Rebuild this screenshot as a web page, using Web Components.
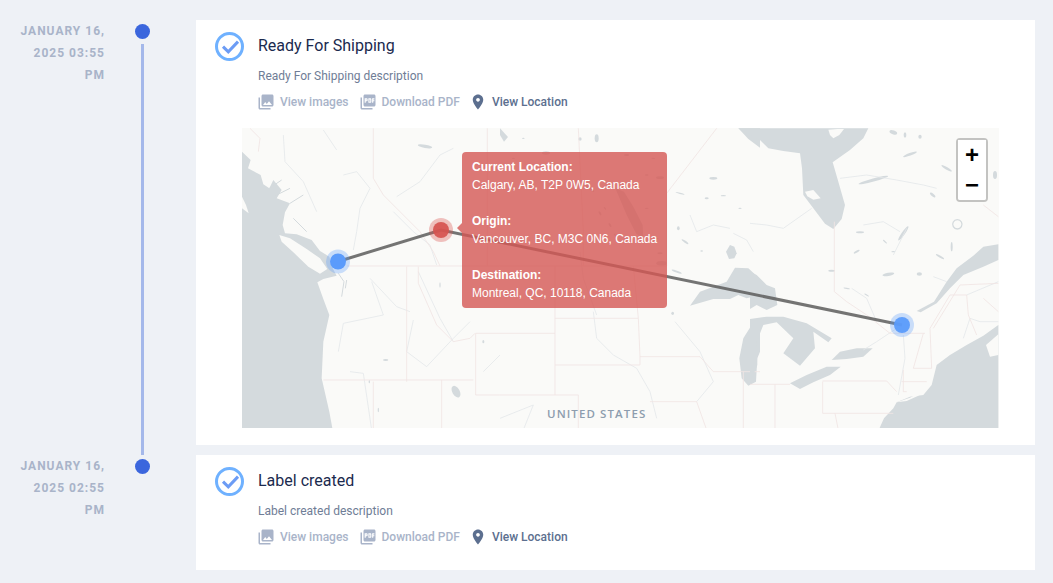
<!DOCTYPE html>
<html lang="en">
<head>
<meta charset="utf-8">
<title>Shipment tracking</title>
<style>
  html, body { margin: 0; background: #eef1f6; }
  body { font-family: Roboto, "Liberation Sans", sans-serif; height: 583px; overflow: hidden; }
  shipment-timeline { padding-top: 20px; }
</style>
</head>
<body>
<shipment-timeline>
  <timeline-row date="January 16, 2025 03:55 PM" line>
    <status-card title="Ready For Shipping" description="Ready For Shipping description">
      <shipment-map></shipment-map>
    </status-card>
  </timeline-row>
  <timeline-row date="January 16, 2025 02:55 PM">
    <status-card title="Label created" description="Label created description"></status-card>
  </timeline-row>
</shipment-timeline>

<script>
const ICONS = {
  images: "M22 16V4c0-1.1-.9-2-2-2H8c-1.1 0-2 .9-2 2v12c0 1.1.9 2 2 2h12c1.1 0 2-.9 2-2zm-11-4l2.03 2.71L16 11l4 5H8l3-4zM2 6v14c0 1.1.9 2 2 2h14v-2H4V6H2z",
  pdf: "M20 2H8c-1.1 0-2 .9-2 2v12c0 1.1.9 2 2 2h12c1.1 0 2-.9 2-2V4c0-1.1-.9-2-2-2zm-8.5 7.5c0 .83-.67 1.5-1.5 1.5H9v2H7.5V7H10c.83 0 1.5.67 1.5 1.5v1zm5 2c0 .83-.67 1.5-1.5 1.5h-2.5V7H15c.83 0 1.5.67 1.5 1.5v3zm4-3H19v1h1.5V11H19v2h-1.5V7h3v1.5zM9 9.5h1v-1H9v1zM4 6H2v14c0 1.1.9 2 2 2h14v-2H4V6zm10 5.5h1v-3h-1v3z",
  pin: "M12 2C8.13 2 5 5.13 5 9c0 5.25 7 13 7 13s7-7.75 7-13c0-3.87-3.13-7-7-7zm0 9.5c-1.38 0-2.5-1.12-2.5-2.5s1.12-2.5 2.5-2.5 2.5 1.12 2.5 2.5-1.12 2.5-2.5 2.5z"
};

class ShipmentTimeline extends HTMLElement {
  constructor() {
    super();
    const root = this.attachShadow({ mode: "open" });
    root.innerHTML = `
      <style>
        :host { display: block; }
      </style>
      <slot></slot>
    `;
  }
}

class TimelineRow extends HTMLElement {
  constructor() {
    super();
    this.attachShadow({ mode: "open" });
  }

  connectedCallback() {
    const date = this.getAttribute("date");
    const hasLine = this.hasAttribute("line");
    this.shadowRoot.innerHTML = `
      <style>
        :host {
          display: grid;
          grid-template-columns: 91px 28px 1fr;
          column-gap: 24px;
          padding-left: 14px;
          padding-right: 18px;
        }
        .date {
          font-size: 12px;
          font-weight: 700;
          line-height: 22px;
          letter-spacing: 1px;
          text-transform: uppercase;
          text-align: right;
          color: #a9b4c9;
        }
        .rail {
          display: flex;
          flex-direction: column;
          align-items: center;
          margin-left: -1px;
        }
        .dot {
          width: 15px;
          height: 15px;
          margin-top: 4px;
          border-radius: 50%;
          background: #3b66dd;
          flex: none;
        }
        .line {
          flex: 1;
          width: 3px;
          margin-top: 5px;
          background: #a4b8ea;
        }
        .content { margin-left: 15px; min-width: 0; }
      </style>
      <div class="date">${date}</div>
      <div class="rail">
        <div class="dot"></div>
        ${hasLine ? '<div class="line"></div>' : ""}
      </div>
      <div class="content"><slot></slot></div>
    `;
  }
}

class ActionLink extends HTMLElement {
  constructor() {
    super();
    this.attachShadow({ mode: "open" });
  }

  connectedCallback() {
    const icon = ICONS[this.getAttribute("icon")];
    this.shadowRoot.innerHTML = `
      <style>
        :host {
          display: inline-flex;
          align-items: center;
          gap: 5px;
          height: 18px;
          font-size: 12px;
          font-weight: 500;
          color: #a9b4c9;
          white-space: nowrap;
        }
        :host([active]) { color: #5c6f8f; margin-left: -1px; }
        svg { width: 18px; height: 18px; fill: currentColor; flex: none; }
      </style>
      <svg viewBox="0 0 24 24"><path d="${icon}"/></svg>
      <slot></slot>
    `;
  }
}

class StatusCard extends HTMLElement {
  constructor() {
    super();
    this.attachShadow({ mode: "open" });
  }

  connectedCallback() {
    this.shadowRoot.innerHTML = `
      <style>
        :host {
          display: block;
          background: #fff;
          margin-bottom: 10px;
          padding: 16px 36px 17px 19px;
        }
        .head { display: flex; column-gap: 13px; }
        .check { width: 30px; height: 30px; flex: none; margin-top: -4px; }
        .body { flex: 1; min-width: 0; }
        .title { font-size: 16px; line-height: 20px; color: #1b2a4e; }
        .description { font-size: 12px; line-height: 18px; margin-top: 11px; color: #6f7d96; }
        .actions { display: flex; gap: 10px; margin: 8px 0 0 -1px; padding-bottom: 7px; }
        ::slotted(shipment-map) { margin: 10px 0 0 -16px; }
      </style>
      <div class="head">
        <svg class="check" viewBox="0 0 30 30">
          <circle cx="14.5" cy="14.5" r="13" fill="none" stroke="#6fb1ff" stroke-width="3"/>
          <path d="M8 14.6l5.3 5.3L23 9.6" fill="none" stroke="#6c9cf5" stroke-width="3"/>
        </svg>
        <div class="body">
          <div class="title">${this.getAttribute("title")}</div>
          <div class="description">${this.getAttribute("description")}</div>
          <div class="actions">
            <action-link icon="images">View images</action-link>
            <action-link icon="pdf">Download PDF</action-link>
            <action-link icon="pin" active>View Location</action-link>
          </div>
          <slot></slot>
        </div>
      </div>
    `;
  }
}

class ZoomControl extends HTMLElement {
  constructor() {
    super();
    const root = this.attachShadow({ mode: "open" });
    root.innerHTML = `
      <style>
        :host {
          position: absolute;
          top: 10px;
          right: 11px;
          width: 28px;
          border: 2px solid rgba(0, 0, 0, .22);
          border-radius: 4px;
          background-clip: padding-box;
        }
        div {
          box-sizing: border-box;
          height: 30px;
          background: #fff;
          color: #000;
          font: 700 24px/29px "Liberation Sans", sans-serif;
          text-align: center;
        }
        div:first-child { border-bottom: 1px solid #ccc; border-radius: 2px 2px 0 0; }
        div:last-child { border-radius: 0 0 2px 2px; }
      </style>
      <div>+</div>
      <div>&minus;</div>
    `;
  }
}

class MapTooltip extends HTMLElement {
  constructor() {
    super();
    const root = this.attachShadow({ mode: "open" });
    root.innerHTML = `
      <style>
        :host {
          position: absolute;
          left: 220px;
          top: 24px;
          width: 185px;
          height: 144px;
          padding: 6px 10px;
          border-radius: 4px;
          background: rgba(212, 88, 84, .8);
          color: #fff;
          font: 12px/18px "Liberation Sans", Arial, sans-serif;
          white-space: nowrap;
        }
        :host::before {
          content: "";
          position: absolute;
          left: -5px;
          top: 71px;
          border: 5px solid transparent;
          border-left: 0;
          border-right-color: rgba(212, 88, 84, .8);
        }
        b { display: block; font-weight: 700; }
        p { margin: 0 0 18px; }
      </style>
      <p><b>Current Location:</b>Calgary, AB, T2P 0W5, Canada</p>
      <p><b>Origin:</b>Vancouver, BC, M3C 0N6, Canada</p>
      <p><b>Destination:</b>Montreal, QC, 10118, Canada</p>
    `;
  }
}

// map drawn in crop coordinates, 3 units = 1px
const WATER = "#d4dadd", LAND = "#fafaf8", BORDER = "#f0e4e3", RIVER = "#e4e8ea";
const blob = (x, y, rx, ry, rot = 0) =>
  `<ellipse cx="${x}" cy="${y}" rx="${rx}" ry="${ry}" transform="rotate(${rot} ${x} ${y})"/>`;

const WEST = `
  <g fill="${WATER}">
    <path d="M6 80L32 105 24 130 62 150 70 178 88 190 100 165 125 195 110 220 150 235 135 262 128 300 135 325 170 328 215 345 240 378 268 395 278 430 290 452 250 462 232 472 250 522 268 570 250 650 245 760 268 860 278 915H6Z"/>
    ${blob(555, 64, 22, 5, 10)}${blob(648, 800, 11, 19, -30)}${blob(437, 705, 8, 3)}${blob(600, 480, 2, 8)}${blob(415, 855, 2, 7)}${blob(388, 770, 2, 5)}
    ${blob(730, 650, 3, 5)}
  </g>
  <path fill="${LAND}" d="M118 330L150 340 200 372 240 400 262 432 240 446 205 425 160 382 125 350Z"/>
  <path fill="${LAND}" d="M6 215L18 240 26 265 6 250Z"/>
  <path fill="none" stroke="${WATER}" stroke-width="3" d="M295 445L312 470 305 515M320 465L316 490M88 190L125 165M100 215L150 190M150 235L190 210M160 280L200 320"/>
  <path fill="none" stroke="${RIVER}" stroke-width="2.5" d="M310 150L350 140 390 190 360 250 350 320 340 375M130 30L135 110 190 170 230 260M250 15L290 75M470 215L540 170 600 90 640 70M460 260L520 320 570 360 590 420M395 470L430 570 310 595 295 680M520 585L500 680 560 725 640 640 690 590M390 460L470 545 510 560M535 440L600 580 640 650M330 740L370 745 395 915M730 740L780 690"/>
  <path fill="none" stroke="${BORDER}" stroke-width="2.5" d="M320 423H780M400 10V160L430 210 480 260 540 320 580 380 600 423M742 10V423M500 425V770M535 425V475L590 600 640 650 690 640 705 625M30 10L60 40 55 80M707 625V810H780M707 625H780M250 765H700M400 770V915M605 765V915"/>
`;

const CENTRAL = `
  <g fill="${WATER}">
    <path d="M570 542L600 500 680 470 705 428 745 430 780 462V510L740 520 715 510 690 522 640 522Z"/>
    <path d="M780 582L755 600 730 640 718 700 725 760 745 782 768 770 772 700 780 680Z"/>
    <path d="M715 10H780V68L745 42Z"/>
    <path d="M678 380L690 360 703 365 710 385 703 400 687 402Z"/>
    <path d="M346 190L372 200 400 245 428 300 430 345 408 325 380 270Z"/>
    <path d="M0 10L24 36 12 50 0 30Z"/>
    ${blob(138, 84, 12, 5)}${blob(290, 40, 6, 12)}${blob(480, 158, 12, 4)}${blob(300, 265, 7, 3, 60)}
    ${blob(330, 300, 7, 3, 60)}${blob(380, 90, 8, 3)}${blob(460, 100, 6, 2)}${blob(640, 160, 12, 4)}${blob(540, 205, 14, 2, 15)}
    ${blob(620, 220, 6, 3)}${blob(670, 212, 8, 2)}${blob(720, 250, 5, 2)}${blob(535, 310, 4, 6)}${blob(555, 350, 12, 3, 35)}
    ${blob(605, 378, 4, 2)}${blob(485, 415, 16, 7)}${blob(530, 440, 16, 3, 20)}${blob(518, 565, 4, 5)}${blob(70, 40, 4, 2)}
    ${blob(240, 42, 5, 5)}${blob(190, 130, 7, 3)}${blob(270, 190, 16, 4, 40)}${blob(40, 100, 5, 2)}${blob(440, 250, 6, 2)}
    ${blob(315, 250, 5, 2, 50)}${blob(345, 330, 5, 2, 50)}${blob(470, 340, 6, 2)}${blob(480, 385, 8, 3)}${blob(440, 150, 6, 2)}
  </g>
  <path fill="none" stroke="${RIVER}" stroke-width="2.5" d="M570 270L590 320 640 300 690 310M700 325L740 345 760 380M280 560L290 640 340 690 410 730 450 800 470 880M0 880L100 840 70 915M525 590L600 680 640 770 590 830M240 380L250 460 290 570"/>
  <path fill="none" stroke="${BORDER}" stroke-width="2.5" d="M235 10L250 320V423M0 423H500M500 205L650 10M500 205V423M165 423V810M165 580H415L400 423M415 580L420 695 420 720M0 625H165M165 720H420M420 695H600L640 740H780M0 810H235V915M450 830H590L620 915M730 740V915"/>
`;

const EAST = `
  <g fill="${WATER}">
    <path d="M-35 10H355L340 40 300 75 248 112 262 160 285 240 275 282 250 312 225 296 190 250 160 210 156 130 150 85 100 78 55 70 30 45 0 30Z"/>
    <path d="M0 440L20 450 50 480 75 490 82 540 50 555 20 540 0 552Z"/>
    <path d="M0 582L50 575 100 575 170 595 245 640 235 652 190 620 195 670 150 722 100 685 130 640 80 592 40 600 20 650 22 720 0 775Z"/>
    <path d="M120 775L170 750 230 725 272 725 240 750 190 772 150 792Z"/>
    <path d="M245 705L270 680 320 670 368 670 340 695 290 702Z"/>
    <path d="M745 358L700 365 670 392 620 430 590 470 552 530 500 558 512 562 560 535 600 490 640 450 700 425 745 405Z"/>
    <path d="M745 600L700 632 650 660 600 690 560 720 545 780 520 810 480 815 440 832 430 850 402 880 386 915H745Z"/>
    ${blob(480, 88, 22, 4, -20)}${blob(430, 22, 12, 6, 20)}${blob(465, 30, 4, 8)}${blob(370, 165, 46, 5, -15)}${blob(460, 325, 5, 26, 35)}
    ${blob(508, 447, 8, 5)}${blob(415, 448, 18, 5, -10)}${blob(330, 322, 12, 3)}${blob(245, 437, 10, 3)}${blob(570, 395, 14, 3, 30)}
    ${blob(605, 365, 3, 14)}${blob(548, 210, 10, 4, 40)}${blob(590, 130, 18, 4, 30)}${blob(735, 150, 6, 12)}${blob(320, 380, 10, 3, -30)}
    ${blob(405, 350, 8, 2, 40)}${blob(350, 510, 8, 2, 30)}${blob(290, 490, 10, 2, 10)}${blob(510, 35, 5, 6)}${blob(430, 380, 6, 2)}
    <path fill="none" stroke="${WATER}" stroke-width="4" d="M622 284a14 14 0 1 0 .1 0"/>
  </g>
  <g fill="${LAND}">
    <path d="M235 14L262 12 282 12 268 30 250 40 240 30Z"/>
    <path d="M165 200L190 195 212 220 190 224 172 214Z"/>
    <path d="M708 660L745 628V690L720 695Z"/>
    <path d="M440 832L480 818 512 800 505 812 470 828Z"/>
  </g>
  <path fill="none" stroke="${RIVER}" stroke-width="2.5" d="M270 160L350 150 440 165 520 180 560 190M0 295L50 300 100 310 185 250M340 300L400 290 450 320M470 310L430 390M550 455L590 470M440 610L380 650 340 675M460 630L465 700 445 810M305 490L350 520 380 590M640 640L660 580 690 590 745 590M650 510L745 470"/>
  <path fill="none" stroke="${BORDER}" stroke-width="2.5" d="M253 290V500L290 530 350 570 420 625H525M540 610L600 510 650 510 655 570 680 630M550 610L630 480 745 475M520 625L490 730H545L540 610M460 735V800M455 770H530M460 800H470M75 778V915M0 778H120M218 770V865M218 768H410L440 800M218 865H430M255 865L265 915M700 520L745 560M700 240L745 275"/>
`;

class ShipmentMap extends HTMLElement {
  constructor() {
    super();
    const root = this.attachShadow({ mode: "open" });
    root.innerHTML = `
      <style>
        :host {
          display: block;
          position: relative;
          height: 300px;
          overflow: hidden;
          background: ${LAND};
        }
        svg { display: block; width: 100%; height: 100%; }
        text {
          font: 600 11.5px "Open Sans", "Liberation Sans", sans-serif;
          letter-spacing: 1.1px;
          fill: #8d9dae;
        }
      </style>
      <svg viewBox="0 0 757 300">
        <g transform="translate(-2 -3) scale(.33333)">${WEST}</g>
        <g transform="translate(258 -3) scale(.33333)">${CENTRAL}</g>
        <g transform="translate(508 -3) scale(.33333)">${EAST}</g>
        <text x="305" y="290">UNITED STATES</text>
        <polyline points="96,133.5 199,102 660,197" fill="none" stroke="#5c5c5c" stroke-opacity=".85" stroke-width="3"/>
        <circle cx="96" cy="133.5" r="12" fill="#5b9bfb" fill-opacity=".3"/>
        <circle cx="96" cy="133.5" r="8" fill="#5b9bfb"/>
        <circle cx="199" cy="102" r="12" fill="#d9534f" fill-opacity=".35"/>
        <circle cx="199" cy="102" r="8" fill="#d6534f" fill-opacity=".92"/>
        <circle cx="660" cy="197" r="12" fill="#5b9bfb" fill-opacity=".3"/>
        <circle cx="660" cy="197" r="8" fill="#5b9bfb" fill-opacity=".95"/>
      </svg>
      <map-tooltip></map-tooltip>
      <zoom-control></zoom-control>
    `;
  }
}

customElements.define("shipment-timeline", ShipmentTimeline);
customElements.define("timeline-row", TimelineRow);
customElements.define("action-link", ActionLink);
customElements.define("status-card", StatusCard);
customElements.define("zoom-control", ZoomControl);
customElements.define("map-tooltip", MapTooltip);
customElements.define("shipment-map", ShipmentMap);
</script>
</body>
</html>
